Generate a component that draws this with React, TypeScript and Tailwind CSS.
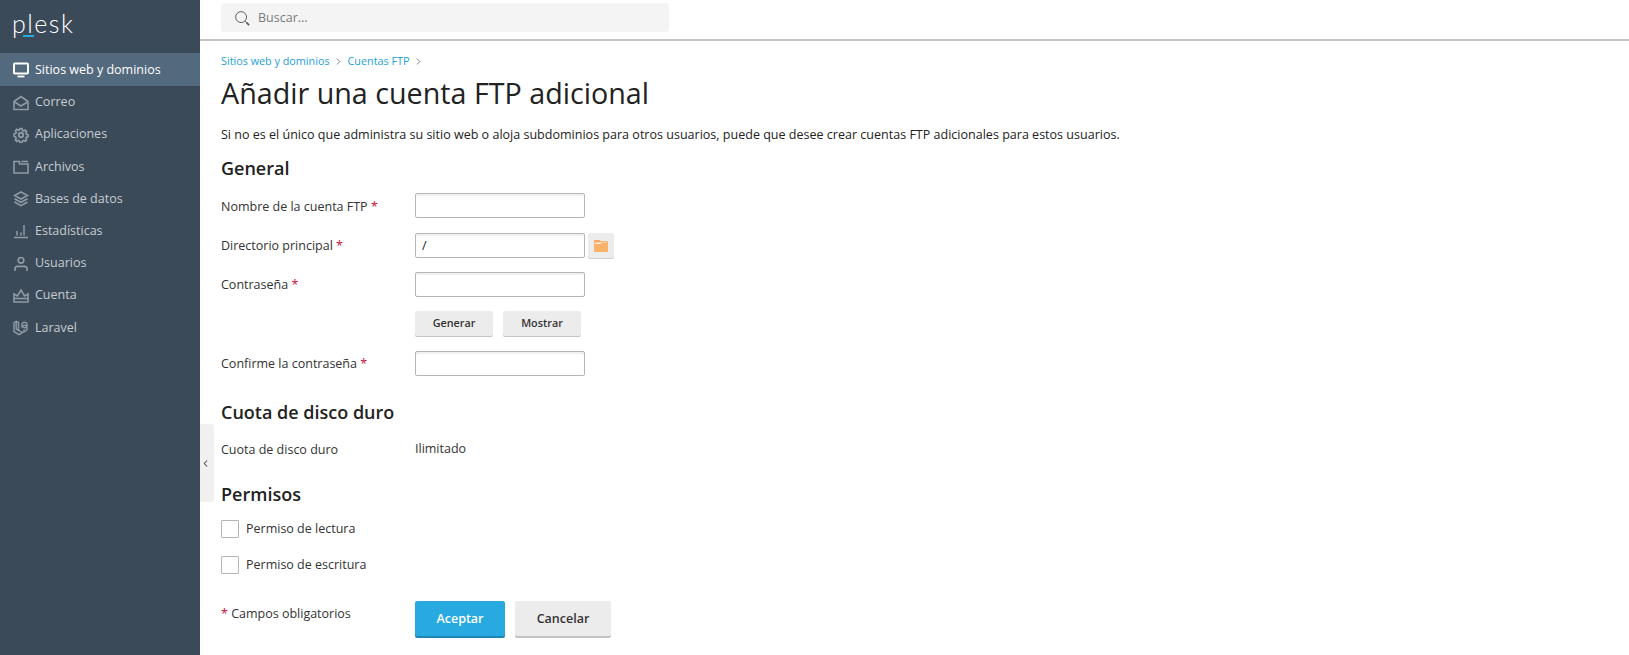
import { ChevronRight, ChevronLeft } from "lucide-react"

const iconClass = "w-[16px] h-[16px] shrink-0"

function MonitorIcon() {
  return (
    <svg viewBox="0 0 16 16" className={iconClass} fill="none" stroke="currentColor">
      <rect x="1" y="1.500" width="14" height="10" rx="0.800" strokeWidth="2" />
      <path d="M4.500 14.500h7" strokeWidth="1.800" />
    </svg>
  )
}

function MailIcon() {
  return (
    <svg viewBox="0 0 16 16" className={iconClass} fill="none" stroke="currentColor" strokeWidth="1.600">
      <path d="M1 6.500L8 1.500l7 5V14.500H1z" />
      <path d="M1.500 7l6.500 4 6.500-4" />
    </svg>
  )
}

function GearIcon() {
  return (
    <svg viewBox="0 0 16 16" className={iconClass} fill="none" stroke="currentColor" strokeWidth="1.900">
      <path d="M6.800 1h2.400l.4 1.900 1.300.6 1.700-1 1.700 1.700-1 1.700.6 1.300 1.900.4v2.400l-1.900.4-.6 1.300 1 1.700-1.700 1.700-1.700-1-1.300.6-.4 1.900H6.800l-.4-1.900-1.300-.6-1.700 1-1.700-1.700 1-1.700-.6-1.300L.2 9.200V6.800l1.900-.4.6-1.300-1-1.700 1.700-1.700 1.700 1 1.300-.6z" transform="translate(0.800 0.800) scale(0.900)" />
      <circle cx="8" cy="8" r="2.200" />
    </svg>
  )
}

function FolderIcon() {
  return (
    <svg viewBox="0 0 16 16" className={iconClass} fill="none" stroke="currentColor" strokeWidth="1.600">
      <path d="M1 2.500V14h14V5H6.500V2.500z" />
      <path d="M8.500 2.500H15" />
    </svg>
  )
}

function LayersIcon() {
  return (
    <svg viewBox="0 0 16 16" className={iconClass} fill="none" stroke="currentColor" strokeWidth="1.600">
      <path d="M8 1l6.500 3.500L8 8 1.500 4.500z" />
      <path d="M1.500 7.800L8 11.300l6.500-3.500" />
      <path d="M1.500 11L8 14.700 14.500 11" />
    </svg>
  )
}

function ChartIcon() {
  return (
    <svg viewBox="0 0 16 16" className={iconClass} fill="none" stroke="currentColor" strokeWidth="1.500">
      <path d="M1 14.500h14" />
      <path d="M4 12.500V8M8 12.500V9.500M11 12.500V2" />
    </svg>
  )
}

function UserIcon() {
  return (
    <svg viewBox="0 0 16 16" className={iconClass} fill="none" stroke="currentColor" strokeWidth="1.600">
      <circle cx="8" cy="4.300" r="2.800" />
      <path d="M2 15v-2.300c0-1.500 1-2.300 2.500-2.300h7c1.500 0 2.500.8 2.500 2.300V15" />
    </svg>
  )
}

function CrownIcon() {
  return (
    <svg viewBox="0 0 16 16" className={iconClass} fill="none" stroke="currentColor" strokeWidth="1.600">
      <path d="M1 6l3.500 2L8 2l3.500 6L15 6v8H1z" />
      <path d="M1 10.500h14" />
    </svg>
  )
}

function LaravelIcon() {
  return (
    <svg viewBox="0 0 16 16" className={iconClass} fill="none" stroke="currentColor" strokeWidth="1.400">
      <path d="M1 2.500L3.200 1.200 5.500 2.500v7.800l3.500 2M1 2.500v9l5 3.200 5-3V9.500M5.500 10.300L3.200 9V1.200" />
      <path d="M9 6.500l2.500-1.500L14 6.500v-3L11.500 2 9 3.500zM9 3.500v3l2.500 1.500L14 6.500M11 12l3-2V6.500" />
    </svg>
  )
}

function SearchIcon() {
  return (
    <svg viewBox="0 0 16 16" className="w-[15px] h-[15px] mr-[8px] shrink-0 text-[#555]" fill="none" stroke="currentColor">
      <circle cx="6.500" cy="6.500" r="5.800" strokeWidth="1" />
      <path d="M10.800 10.800l1 1" strokeWidth="1" />
      <path d="M12 12l3 3" strokeWidth="1.800" />
    </svg>
  )
}

const navItems = [
  { label: "Sitios web y dominios", icon: MonitorIcon, active: true },
  { label: "Correo", icon: MailIcon },
  { label: "Aplicaciones", icon: GearIcon },
  { label: "Archivos", icon: FolderIcon },
  { label: "Bases de datos", icon: LayersIcon },
  { label: "Estadísticas", icon: ChartIcon },
  { label: "Usuarios", icon: UserIcon },
  { label: "Cuenta", icon: CrownIcon },
  { label: "Laravel", icon: LaravelIcon },
]

function Required() {
  return <span className="text-[#c8103c]"> *</span>
}

function TextField({ value }: { value?: string }) {
  return (
    <input
      readOnly
      value={value ?? ""}
      className="w-[170px] h-[25px] bg-white border border-[#b5b5b5] rounded-[2px] px-[6px] text-[12.500px] text-[#222] shadow-[inset_0_2px_0_#f1f1f1] outline-none"
    />
  )
}

function FormRow({ label, required, children, nudge }: { label: string; required?: boolean; children: React.ReactNode; nudge?: boolean }) {
  return (
    <div className="flex items-center h-[25px]">
      <label className={`w-[194px] shrink-0 text-[12.500px] text-[#333] ${nudge ? "pt-[3px]" : "pt-[1px]"}`}>
        {label}
        {required && <Required />}
      </label>
      {children}
    </div>
  )
}

function Checkbox({ label }: { label: string }) {
  return (
    <label className="flex items-center gap-[7px] h-[18px] text-[12.500px] text-[#333]">
      <span className="w-[18px] h-[18px] bg-white border border-[#b5b5b5] rounded-[1px]" />
      {label}
    </label>
  )
}

export default function App() {
  return (
    <div className="relative flex h-[655px] overflow-hidden bg-white font-['Open_Sans',sans-serif] text-[#222]">
      {/* sidebar */}
      <aside className="w-[200px] shrink-0 bg-[#3b4a59] text-[#c6ccd2]">
        <div className="relative h-[53px] pl-[12px] pt-[8px] font-['Lato',sans-serif] font-light text-[25px] leading-[30px] tracking-[1.500px] text-white">
          plesk
          <span className="absolute left-[23px] top-[35px] w-[11px] h-[2px] bg-[#28aade]" />
        </div>
        <nav>
          {navItems.map(({ label, icon: Icon, active }) => (
            <div
              key={label}
              className={`flex items-center gap-[6px] pl-[13px] pt-[1px] text-[12.500px] ${active ? "h-[33px] bg-[#53697d] text-white" : "h-[32.200px] text-[#c6ccd2] [&_svg]:text-[#8f9aa5]"}`}
            >
              <Icon />
              <span>{label}</span>
            </div>
          ))}
        </nav>
      </aside>

      {/* collapse handle */}
      <div className="absolute left-[200px] top-[424px] w-[14px] h-[78px] bg-[#f0f0f0] rounded-r-[3px] flex items-center justify-center pr-[3px] text-[#444]">
        <ChevronLeft size={11} strokeWidth={2.200} />
      </div>

      <div className="flex-1 min-w-0">
        {/* top bar */}
        <header className="h-[41px] border-b-2 border-[#c4c4c4] pl-[21px] pt-[3px]">
          <div className="flex items-center w-[448px] h-[29px] bg-[#f4f4f4] rounded-[3px] pl-[14px] pt-[1px] text-[12.500px] text-[#7a7a7a]">
            <SearchIcon />
            Buscar...
          </div>
        </header>

        <main className="pl-[21px]">
          <div className="flex items-center gap-[3px] mt-[12px] h-[16px] text-[10.800px] text-[#1e9ed6]">
            <span>Sitios web y dominios</span>
            <ChevronRight size={11} className="text-[#777] mx-[0.500px]" />
            <span>Cuentas FTP</span>
            <ChevronRight size={11} className="text-[#777] mx-[0.500px]" />
          </div>

          <h1 className="mt-[4px] text-[28.700px] leading-[40px] font-normal text-[#222]">Añadir una cuenta FTP adicional</h1>

          <p className="mt-[13px] text-[12.540px] leading-[18px] text-[#222]">
            Si no es el único que administra su sitio web o aloja subdominios para otros usuarios, puede que desee crear cuentas FTP adicionales para estos usuarios.
          </p>

          <h2 className="mt-[12px] text-[18px] leading-[24px] font-semibold">General</h2>

          <div className="mt-[13px] flex flex-col gap-[14.500px]">
            <FormRow label="Nombre de la cuenta FTP" required nudge>
              <TextField />
            </FormRow>
            <FormRow label="Directorio principal" required nudge>
              <TextField value="/" />
              <button className="ml-[3px] w-[26px] h-[25px] bg-[#ececec] rounded-[2px] shadow-[0_1px_0_#cfcfcf] flex items-center justify-center pt-[2px]">
                <svg viewBox="0 0 16 14" className="w-[14px] h-[12px]">
                  <path d="M0 0h6l1.500 1.500H16V14H0z" fill="#f9a85a" />
                  <path d="M1 3h14v1.500H1z" fill="#fff" />
                  <path d="M0 5h7.500l1-1.500H16V14H0z" fill="#fbb36c" />
                </svg>
              </button>
            </FormRow>
            <FormRow label="Contraseña" required>
              <TextField />
            </FormRow>
            <div className="flex gap-[10px] pl-[194px] -mt-[1px] mb-[1px]">
              <button className="w-[78px] h-[25px] bg-[#ececec] rounded-[2px] shadow-[0_1px_0_#c4c4c4] text-[10.800px] font-semibold text-[#333]">Generar</button>
              <button className="w-[78px] h-[25px] bg-[#ececec] rounded-[2px] shadow-[0_1px_0_#c4c4c4] text-[10.800px] font-semibold text-[#333]">Mostrar</button>
            </div>
            <FormRow label="Confirme la contraseña" required>
              <TextField />
            </FormRow>
          </div>

          <h2 className="mt-[24px] text-[18px] leading-[24px] font-semibold">Cuota de disco duro</h2>
          <div className="mt-[17px] flex items-center h-[18px] text-[12.500px] text-[#333]">
            <span className="w-[194px]">Cuota de disco duro</span>
            <span className="-mt-[2px]">Ilimitado</span>
          </div>

          <h2 className="mt-[23px] text-[18px] leading-[24px] font-semibold">Permisos</h2>
          <div className="mt-[14px] flex flex-col gap-[18px]">
            <Checkbox label="Permiso de lectura" />
            <Checkbox label="Permiso de escritura" />
          </div>

          <div className="mt-[27px] flex items-start">
            <span className="w-[194px] pt-[4px] text-[12.500px] text-[#333]">
              <span className="text-[#c8103c]">* </span>Campos obligatorios
            </span>
            <button className="w-[90px] h-[35px] bg-[#28a9e0] rounded-[2px] shadow-[0_2px_0_#1c86b5] pt-[1px] text-[12.500px] font-semibold text-white">Aceptar</button>
            <button className="ml-[10px] w-[96px] h-[35px] bg-[#ececec] rounded-[2px] shadow-[0_2px_0_#c4c4c4] pt-[1px] text-[12.500px] font-semibold text-[#333]">Cancelar</button>
          </div>
        </main>
      </div>
    </div>
  )
}
